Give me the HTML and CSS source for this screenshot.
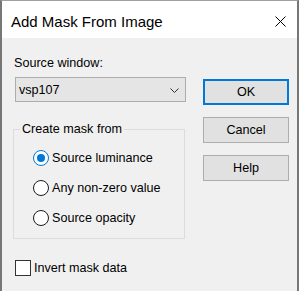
FILE: index.html
```html
<!DOCTYPE html>
<html lang="en">
	<head>
		<meta charset="UTF-8" />
		<title>Add Mask From Image</title>
		<link rel="stylesheet" href="styles.css">
	</head>
	<body>
		<div class="dialog">
			<!-- title bar -->
			<div class="titlebar">
				<span class="title">Add Mask From Image</span>
				<svg class="close" width="11" height="11" viewBox="0 0 11 11">
					<path d="M0.5 0.5 L10.5 10.5 M10.5 0.5 L0.5 10.5" stroke="#000" stroke-width="1" fill="none" />
				</svg>
			</div>

			<div class="content">
				<!-- left: source + options -->
				<div class="main">
					<div class="label">Source window:</div>
					<div class="select">
						<span>vsp107</span>
						<svg width="9" height="5" viewBox="0 0 9 5">
							<path d="M0.5 0.5 L4.5 4.5 L8.5 0.5" stroke="#333" stroke-width="1" fill="none" />
						</svg>
					</div>

					<fieldset class="group">
						<legend>Create mask from</legend>
						<div class="option"><span class="radio checked"></span>Source luminance</div>
						<div class="option"><span class="radio"></span>Any non-zero value</div>
						<div class="option"><span class="radio"></span>Source opacity</div>
					</fieldset>

					<div class="check"><span class="box"></span>Invert mask data</div>
				</div>

				<!-- right: buttons -->
				<div class="buttons">
					<button class="btn default">OK</button>
					<button class="btn">Cancel</button>
					<button class="btn">Help</button>
				</div>
			</div>
		</div>
	</body>
</html>
```

FILE: styles.css
```css
html,
body {
	margin: 0;
	padding: 0;
}
body {
	font-family: "Liberation Sans", Arial, sans-serif;
	font-size: 12.6px;
	color: #000;
}
.dialog {
	width: 299px;
	height: 291px;
	box-sizing: border-box;
	border-top: 1px solid #a0a0a0;
	border-left: 2px solid #777;
	border-right: 2px solid #777;
	background: #f0f0f0;
	overflow: hidden;
}
.titlebar {
	height: 37px;
	background: #fff;
	display: flex;
	align-items: center;
	justify-content: space-between;
	padding: 0 11px 0 9px;
}
.title {
	font-size: 15px;
	margin-top: 3px;
}
.close {
	display: block;
	margin-top: 4px;
}
.content {
	display: flex;
	padding-left: 11px;
}
.main {
	width: 173px;
}
.label {
	line-height: 15px;
	margin-top: 18px;
	padding-left: 1px;
}
.select {
	margin: 6px 0 0 2px;
	width: 171px;
	height: 25px;
	box-sizing: border-box;
	border: 1px solid #adadad;
	background: #e5e5e5;
	display: flex;
	align-items: center;
	justify-content: space-between;
	padding: 0 6px 0 3px;
}
.select svg {
	display: block;
	margin-top: 1px;
}
.group {
	margin: 20px 0 0 0;
	padding: 6px 0 5px 0;
	width: 172px;
	box-sizing: border-box;
	border: 1px solid #dcdcdc;
	min-width: 0;
}
.group legend {
	line-height: 15px;
	padding: 0 2px;
	margin-left: 6px;
}
.option {
	height: 30px;
	display: flex;
	align-items: center;
	padding-left: 19px;
}
.radio {
	flex: none;
	width: 16px;
	height: 16px;
	box-sizing: border-box;
	border: 1px solid #1a1a1a;
	border-radius: 50%;
	background: #fff;
	margin-right: 3px;
	display: flex;
	align-items: center;
	justify-content: center;
}
.radio.checked {
	border-color: #0078d7;
}
.radio.checked::after {
	content: "";
	width: 8px;
	height: 8px;
	border-radius: 50%;
	background: #0078d7;
}
.check {
	margin: 21px 0 0 2px;
	height: 16px;
	display: flex;
	align-items: center;
}
.box {
	flex: none;
	width: 16px;
	height: 16px;
	box-sizing: border-box;
	border: 1px solid #333;
	background: #fff;
	margin-right: 3px;
}
.buttons {
	display: flex;
	flex-direction: column;
	gap: 12px;
	margin: 41px 0 0 17px;
}
.btn {
	width: 86px;
	height: 26px;
	box-sizing: border-box;
	border: 1px solid #adadad;
	background: #e1e1e1;
	font-family: inherit;
	font-size: 12.6px;
	color: #000;
	padding: 0;
}
.btn.default {
	border: 2px solid #0078d7;
}
```
